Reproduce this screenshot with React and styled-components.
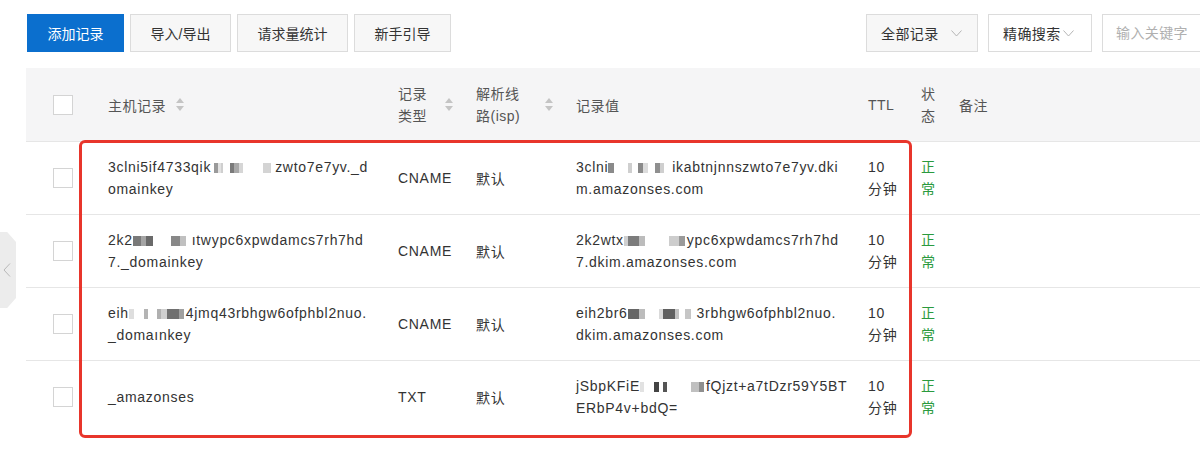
import React from "react";
import styled, { createGlobalStyle } from "styled-components";

const GlobalStyle = createGlobalStyle`
	html, body {
		margin: 0;
		padding: 0;
		background: #fff;
		overflow: hidden;
	}
	body {
		font-family: "Liberation Sans", "Noto Sans CJK SC", sans-serif;
		font-size: 14px;
		color: #333;
	}
`;

// * mosaic patterns used to hide parts of the keys
const M = {
	h1: [[3, "transparent"], [4, "#9a9a9a"], [3, "#e2e2e2"], [2, "#cfcfcf"], [7, "transparent"], [4, "#7a7a7a"], [5, "#a8a8a8"], [4, "#d6d6d6"], [20, "transparent"], [8, "#d4d4d4"], [2, "transparent"]],
	v1: [[6, "#8a8a8a"], [14, "transparent"], [4, "#cfcfcf"], [6, "transparent"], [5, "#8a8a8a"], [5, "#dcdcdc"], [7, "transparent"], [5, "#8f8f8f"], [4, "#cfcfcf"], [6, "transparent"]],
	h2: [[8, "#7a7a7a"], [5, "#a4a4a4"], [7, "#6a6a6a"], [18, "transparent"], [9, "#888"], [6, "#c0c0c0"], [4, "transparent"]],
	v2: [[4, "#cfcfcf"], [11, "#7c7c7c"], [6, "#bcbcbc"], [24, "transparent"], [10, "#cdcdcd"], [6, "#9a9a9a"]],
	h3: [[5, "#dedede"], [10, "transparent"], [4, "#b4b4b4"], [9, "transparent"], [4, "#b0b0b0"], [6, "#cfcfcf"], [12, "#707070"], [5, "#a0a0a0"]],
	v3: [[11, "#666"], [6, "#bcbcbc"], [14, "transparent"], [4, "#dadada"], [12, "#606060"], [4, "#c2c2c2"], [6, "transparent"], [6, "#c6c6c6"], [4, "transparent"]],
	v4: [[4, "#e2e2e2"], [10, "transparent"], [5, "#444"], [4, "transparent"], [4, "#555"], [24, "transparent"], [8, "#c0c0c0"], [5, "#8f8f8f"]],
};

const rows = [
	{
		host: [["3clni5if4733qik", M.h1, "zwto7e7yv._d"], ["omainkey"]],
		type: "CNAME",
		value: [["3clni", M.v1, "ikabtnjnnszwto7e7yv.dki"], ["m.amazonses.com"]],
	},
	{
		host: [["2k2", M.h2, "ıtwypc6xpwdamcs7rh7hd"], ["7._domainkey"]],
		type: "CNAME",
		value: [["2k2wtx", M.v2, "ypc6xpwdamcs7rh7hd"], ["7.dkim.amazonses.com"]],
	},
	{
		host: [["eih", M.h3, "4jmq43rbhgw6ofphbl2nuo."], ["_domaınkey"]],
		type: "CNAME",
		value: [["eih2br6", M.v3, "3rbhgw6ofphbl2nuo."], ["dkim.amazonses.com"]],
	},
	{
		host: [["_amazonses"]],
		type: "TXT",
		value: [["jSbpKFiE", M.v4, "fQjzt+a7tDzr59Y5BT"], ["ERbP4v+bdQ="]],
	},
];

const Chevron = ({ color = "#b5b5b5" }) => (
	<svg width="11" height="7" viewBox="0 0 11 7">
		<polyline points="0.5,0.5 5.5,6 10.5,0.5" fill="none" stroke={color} strokeWidth="1" />
	</svg>
);

const SortIcon = () => (
	<svg width="8" height="13" viewBox="0 0 8 13">
		<polygon points="4,0 8,5 0,5" fill="#c4c4c4" />
		<polygon points="0,8 8,8 4,13" fill="#c4c4c4" />
	</svg>
);

const Mosaic = ({ blocks }) => (
	<MosaicWrap>
		{blocks.map(([w, c], i) => (
			<MosaicBlock key={i} $w={w} $c={c} />
		))}
	</MosaicWrap>
);

const Lines = ({ lines }) =>
	lines.map((parts, i) => (
		<Line key={i}>
			{parts.map((p, j) =>
				typeof p === "string" ? <span key={j}>{p}</span> : <Mosaic key={j} blocks={p} />
			)}
		</Line>
	));

export default function App() {
	return (
		<Page>
			<GlobalStyle />
			<Toolbar>
				<ButtonGroup>
					<Btn $primary>添加记录</Btn>
					<Btn>导入/导出</Btn>
					<Btn>请求量统计</Btn>
					<Btn>新手引导</Btn>
				</ButtonGroup>
				<SearchGroup>
					<Select $filled $w={112} $between>
						全部记录
						<Chevron />
					</Select>
					<Select $w={104}>
						精确搜索
						<Chevron />
					</Select>
					<SearchInput placeholder="输入关键字" />
				</SearchGroup>
			</Toolbar>

			<Table>
				<HeadRow>
					<CheckCell>
						<Checkbox />
					</CheckCell>
					<HeadCell>
						<HeadLabel>主机记录</HeadLabel>
						<SortIcon />
					</HeadCell>
					<HeadCell $spread>
						<HeadLabel>
							<Line>记录</Line>
							<Line>类型</Line>
						</HeadLabel>
						<SortIcon />
					</HeadCell>
					<HeadCell $spread>
						<HeadLabel>
							<Line>解析线</Line>
							<Line>路(isp)</Line>
						</HeadLabel>
						<SortIcon />
					</HeadCell>
					<HeadCell>记录值</HeadCell>
					<HeadCell>TTL</HeadCell>
					<HeadCell>
						<HeadLabel>
							<Line>状</Line>
							<Line>态</Line>
						</HeadLabel>
					</HeadCell>
					<HeadCell>备注</HeadCell>
				</HeadRow>

				{rows.map((r, i) => (
					<BodyRow key={i}>
						<CheckCell>
							<Checkbox />
						</CheckCell>
						<Cell>
							<div>
								<Lines lines={r.host} />
							</div>
						</Cell>
						<Cell>{r.type}</Cell>
						<Cell>默认</Cell>
						<Cell>
							<div>
								<Lines lines={r.value} />
							</div>
						</Cell>
						<Cell>
							<div>
								<Line>10</Line>
								<Line>分钟</Line>
							</div>
						</Cell>
						<Cell $status>
							<div>
								<Line>正</Line>
								<Line>常</Line>
							</div>
						</Cell>
						<Cell />
					</BodyRow>
				))}

				<Highlight />
			</Table>

			<SideTab>
				<svg width="8" height="14" viewBox="0 0 8 14">
					<polyline points="7,0.5 1,7 7,13.5" fill="none" stroke="#b8b8b8" strokeWidth="1" />
				</svg>
			</SideTab>
		</Page>
	);
}

const Page = styled.div`
	position: relative;
	width: 1200px;
	height: 452px;
	box-sizing: border-box;
	padding: 14px 0 0 26px;
	overflow: hidden;
`;

// * toolbar

const Toolbar = styled.div`
	display: flex;
	align-items: center;
	justify-content: space-between;
	margin-right: -22px;
	padding-left: 1px;
`;

const ButtonGroup = styled.div`
	display: flex;
	gap: 6px;
`;

const Btn = styled.button`
	height: 38px;
	padding: 0 19.5px;
	border: 1px solid ${(p) => (p.$primary ? "#0b6fce" : "#dcdcdc")};
	background: ${(p) => (p.$primary ? "#0b6fce" : "#f7f7f7")};
	color: ${(p) => (p.$primary ? "#fff" : "#333")};
	font-family: inherit;
	font-size: 14px;
	cursor: pointer;
`;

const SearchGroup = styled.div`
	display: flex;
	gap: 10px;
`;

const Select = styled.div`
	box-sizing: border-box;
	width: ${(p) => p.$w}px;
	height: 38px;
	display: flex;
	align-items: center;
	justify-content: ${(p) => (p.$between ? "space-between" : "flex-start")};
	gap: 2px;
	padding: 0 15px 0 14px;
	border: 1px solid #dcdcdc;
	background: ${(p) => (p.$filled ? "#f7f7f7" : "#fff")};
	color: #333;
	letter-spacing: 0.4px;
`;

const SearchInput = styled.input`
	box-sizing: border-box;
	width: 120px;
	height: 38px;
	padding: 0 13px;
	border: 1px solid #dcdcdc;
	font-family: inherit;
	font-size: 14px;
	letter-spacing: 0.4px;
	outline: none;
	&::placeholder {
		color: #b0b0b0;
	}
`;

// * table

const Table = styled.div`
	position: relative;
	margin-top: 16px;
`;

const columns = "69px 290px 78px 100px 292px 53px 38px 1fr";

const HeadRow = styled.div`
	display: grid;
	grid-template-columns: ${columns};
	height: 73px;
	background: #f5f5f6;
	color: #555;
	letter-spacing: 0.5px;
`;

const BodyRow = styled.div`
	display: grid;
	grid-template-columns: ${columns};
	height: 73px;
	border-top: 1px solid #e6e6e6;
	box-sizing: border-box;
	letter-spacing: 0.7px;
	&:last-of-type {
		border-bottom: 1px solid #e6e6e6;
	}
`;

const HeadCell = styled.div`
	display: flex;
	align-items: center;
	justify-content: ${(p) => (p.$spread ? "space-between" : "flex-start")};
	gap: 10px;
	padding: 0 10px 0 13px;
`;

const HeadLabel = styled.div``;

const Cell = styled.div`
	display: flex;
	align-items: center;
	padding: 0 8px 0 13px;
	color: ${(p) => (p.$status ? "#2a9a3e" : "#333")};
	white-space: nowrap;
`;

const CheckCell = styled.div`
	display: flex;
	align-items: center;
	padding-left: 27px;
`;

const Checkbox = styled.span`
	display: block;
	width: 18px;
	height: 18px;
	border: 1px solid #d4d4d4;
	background: #fff;
`;

const Line = styled.div`
	line-height: 22px;
	white-space: nowrap;
`;

const MosaicWrap = styled.span`
	display: inline-flex;
	align-items: center;
	height: 11px;
	margin-right: 2px;
	vertical-align: -1px;
`;

const MosaicBlock = styled.span`
	display: inline-block;
	width: ${(p) => p.$w}px;
	height: 10px;
	background: ${(p) => p.$c};
`;

// * annotation box drawn over the records

const Highlight = styled.div`
	position: absolute;
	left: 53px;
	top: 72px;
	width: 833px;
	height: 298px;
	box-sizing: border-box;
	border: 3px solid #e8352b;
	border-radius: 6px;
	pointer-events: none;
`;

const SideTab = styled.div`
	position: absolute;
	left: 0;
	top: 232px;
	width: 16px;
	height: 76px;
	background: #ececec;
	clip-path: polygon(0 0, 45% 0, 100% 10px, 100% calc(100% - 10px), 45% 100%, 0 100%);
	display: flex;
	align-items: center;
	padding-left: 3px;
	box-sizing: border-box;
`;
